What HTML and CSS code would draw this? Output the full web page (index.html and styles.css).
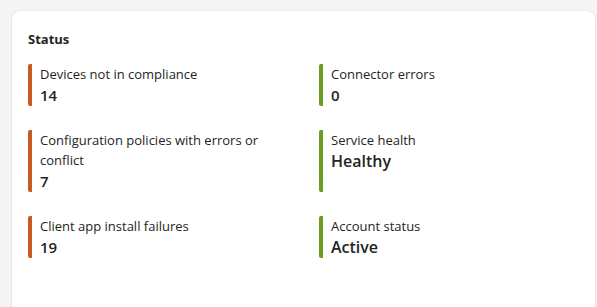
FILE: index.html
```html
<!DOCTYPE html>
<html lang="en">
<head>
    <meta charset="UTF-8">
    <title>Status</title>
    <link rel="stylesheet" href="styles.css">
</head>
<body>
    <div class="card">
        <h2 class="card-title">Status</h2>
        <div class="status-grid">
            <div class="status-item warn">
                <div class="label">Devices not in compliance</div>
                <div class="value">14</div>
            </div>
            <div class="status-item ok">
                <div class="label">Connector errors</div>
                <div class="value">0</div>
            </div>
            <div class="status-item warn">
                <div class="label">Configuration policies with errors or conflict</div>
                <div class="value">7</div>
            </div>
            <div class="status-item ok">
                <div class="label">Service health</div>
                <div class="value big">Healthy</div>
            </div>
            <div class="status-item warn">
                <div class="label">Client app install failures</div>
                <div class="value">19</div>
            </div>
            <div class="status-item ok">
                <div class="label">Account status</div>
                <div class="value big">Active</div>
            </div>
        </div>
    </div>
</body>
</html>
```

FILE: styles.css
```css
html, body {
    height: 100%;
}
body {
    margin: 0;
    padding: 11px 2px 0 12px;
    background: #f5f5f5;
    font-family: "Open Sans", sans-serif;
    color: #242424;
    box-sizing: border-box;
    overflow: hidden;
}
.card {
    background: #fff;
    border-radius: 8px 8px 0 0;
    box-shadow: 0 0 2px rgba(0, 0, 0, 0.12), 0 1px 2px rgba(0, 0, 0, 0.08);
    padding: 18px 16px 0 16px;
    height: 100%;
    box-sizing: border-box;
}
.card-title {
    margin: 0 0 15px;
    font-size: 13px;
    font-weight: 700;
    line-height: 20px;
}
.status-grid {
    display: grid;
    grid-template-columns: 260px 1fr;
    column-gap: 31px;
    row-gap: 24px;
}
.status-item {
    border-left: 4px solid;
    border-radius: 2px;
    padding-left: 8px;
    width: 240px;
}
.status-item.warn {
    border-color: #ca5b24;
}
.status-item.ok {
    border-color: #6a9e23;
}
.label {
    font-size: 13px;
    line-height: 20px;
}
.value {
    font-size: 15px;
    font-weight: 600;
    line-height: 22px;
}
.value.big {
    font-size: 16px;
}
```
